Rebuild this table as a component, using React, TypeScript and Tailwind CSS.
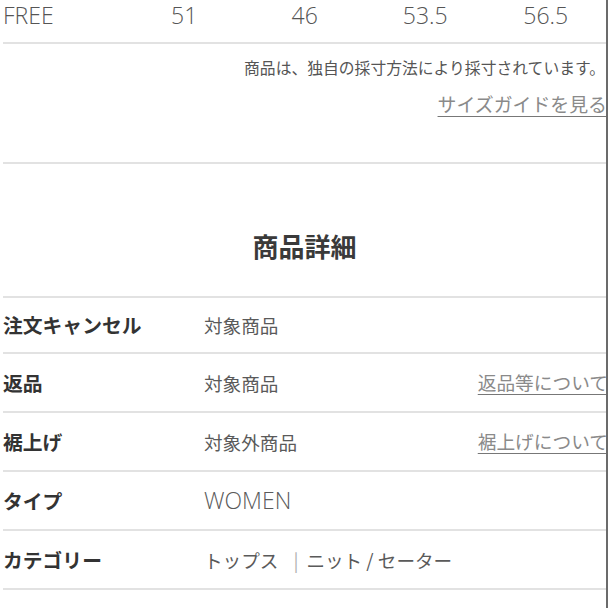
const jp = "font-['Noto_Sans_CJK_JP',sans-serif]";
const latin = "font-['Open_Sans','Noto_Sans_CJK_JP',sans-serif]";

type Row = { label: string; value: React.ReactNode; link?: string; latin?: boolean; h: string };

const rows: Row[] = [
  { label: "注文キャンセル", value: "対象商品", h: "h-[56px]" },
  { label: "返品", value: "対象商品", link: "返品等について", h: "h-[59px]" },
  { label: "裾上げ", value: "対象外商品", link: "裾上げについて", h: "h-[59px]" },
  { label: "タイプ", value: "WOMEN", latin: true, h: "h-[59px]" },
  {
    label: "カテゴリー",
    value: (
      <>
        トップス<span className="ml-[15px] mr-[8px] text-[#b0b0b0]">|</span>ニット / セーター
      </>
    ),
    h: "h-[59px]",
  },
  { label: "ブランド", value: "ニット", h: "h-[59px]" },
];

const sizes = ["51", "46", "53.5", "56.5"];

export default function App() {
  return (
    <div className="w-[608px] h-[608px] overflow-hidden bg-white">
      <div className="w-[608px] h-[608px] overflow-hidden pl-[3px] border-r-2 border-[#6b6b6b]">
        {/* size table tail */}
        <div className={`grid grid-cols-[121px_1fr_1fr_1fr_1fr] h-[44px] border-b-2 border-[#e2e2e2] text-[23px] leading-[30px] font-light text-[#555] ${latin}`}>
          <span>FREE</span>
          {sizes.map((s) => (
            <span key={s} className="text-center">
              {s}
            </span>
          ))}
        </div>

        <div className={`flex flex-col items-end h-[120px] border-b-2 border-[#e2e2e2] ${jp}`}>
          <p className="mt-[13px] text-[15.8px] leading-[22px] text-[#555] mr-[1px]">
            商品は、独自の採寸方法により採寸されています。
          </p>
          <a className="mt-[12px] text-[18.9px] leading-[26px] text-[#8a8a8a] underline underline-offset-[4px] decoration-[#777] -mr-[1px]">
            サイズガイドを見る
          </a>
        </div>

        <h2 className={`pt-[65px] pb-[33px] text-center text-[26px] leading-[34px] font-bold text-[#3a3a3a] border-b-2 border-[#e2e2e2] ${jp}`}>
          商品詳細
        </h2>

        {rows.map((r) => (
          <div key={r.label} className={`flex items-center ${r.h} border-b-2 border-[#e2e2e2] ${jp}`}>
            <span className="w-[201px] shrink-0 text-[19.8px] font-bold text-[#333]">{r.label}</span>
            <span
              className={
                r.latin
                  ? `flex-1 text-[23px] font-light text-[#5a5a5a] ${latin}`
                  : "flex-1 text-[18.6px] text-[#5a5a5a]"
              }
            >
              {r.value}
            </span>
            {r.link && (
              <a className="text-[18.7px] text-[#8a8a8a] underline underline-offset-[4px] decoration-[#777] whitespace-nowrap -mr-[2px]">
                {r.link}
              </a>
            )}
          </div>
        ))}
      </div>
    </div>
  );
}
